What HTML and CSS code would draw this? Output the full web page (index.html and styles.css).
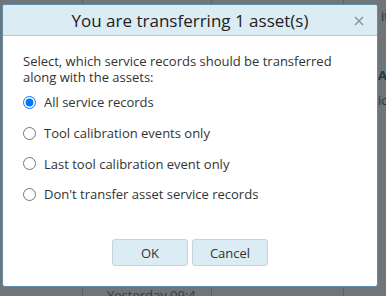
FILE: index.html
```html
<!DOCTYPE html>
<html lang="en">
<head>
  <meta charset="UTF-8" />
  <meta name="viewport" content="width=device-width, initial-scale=1.0" />
  <title>Transfer assets</title>
  <link rel="stylesheet" href="styles.css">
</head>
<body>

  <!-- page behind the dialog -->
  <div class="fondo">
    <div class="fila">
      <span class="celda c1"></span>
      <span class="celda c2"></span>
      <span class="celda c3"></span>
      <span class="celda c4">it</span>
    </div>
    <div class="lado">
      <p class="lado-titulo">Al</p>
      <p class="lado-texto">ic</p>
    </div>
    <div class="fila abajo">
      <span class="celda c1"></span>
      <span class="celda c2">Yesterday 09:4</span>
      <span class="celda c3"></span>
      <span class="celda c4"></span>
    </div>
  </div>

  <div class="dialogo">
    <div class="cabecera">
      <h1>You are transferring 1 asset(s)</h1>
      <button class="cerrar" aria-label="Close">
        <svg width="10" height="10" viewBox="0 0 10 10">
          <path d="M1 1 L9 9 M9 1 L1 9" stroke="#8f999e" stroke-width="1.6" fill="none"/>
        </svg>
      </button>
    </div>

    <div class="cuerpo">
      <p class="pregunta">Select, which service records should be transferred along with the assets:</p>

      <label class="opcion">
        <input type="radio" name="registros" checked>
        <span>All service records</span>
      </label>
      <label class="opcion">
        <input type="radio" name="registros">
        <span>Tool calibration events only</span>
      </label>
      <label class="opcion">
        <input type="radio" name="registros">
        <span>Last tool calibration event only</span>
      </label>
      <label class="opcion">
        <input type="radio" name="registros">
        <span>Don't transfer asset service records</span>
      </label>
    </div>

    <div class="botones">
      <button class="boton">OK</button>
      <button class="boton">Cancel</button>
    </div>
  </div>

</body>
</html>
```

FILE: styles.css
```css
body {
  margin: 0;
  font-family: "Open Sans", "Noto Sans", sans-serif;
  background-color: #6f7579;
  width: 386px;
  height: 296px;
  overflow: hidden;
  position: relative;
}

/* page behind, dimmed */
.fondo {
  height: 296px;
  display: flex;
  flex-direction: column;
  justify-content: space-between;
}

.fila {
  display: flex;
  height: 30px;
}

.celda {
  border-right: 1px solid #5c6266;
  color: #1d3340;
  font-size: 13px;
  line-height: 30px;
  overflow: hidden;
  white-space: nowrap;
}

.c1 { width: 82px; }
.c2 { width: 129px; padding-left: 24px; box-sizing: border-box; }
.c3 { width: 131px; }
.c4 { flex: 1; border-right: none; padding-left: 37px; line-height: 32px; }

.abajo {
  height: 11px;
  align-items: flex-start;
}

.abajo .celda {
  line-height: 20px;
  height: 11px;
  color: #2a3e4a;
}

.lado {
  align-self: flex-end;
  width: 8px;
  margin-top: -140px;
  overflow: hidden;
  color: #1d3a4a;
  font-size: 13px;
}

.lado p {
  margin: 0;
}

.lado-titulo {
  font-weight: bold;
  margin-bottom: 7px !important;
}

/* dialog */
.dialogo {
  position: absolute;
  left: 2px;
  top: 4px;
  width: 374px;
  height: 281px;
  background-color: white;
  border: 1px solid #5f8ea8;
  border-radius: 3px;
  display: flex;
  flex-direction: column;
  overflow: hidden;
}

.cabecera {
  background-color: #dbecf4;
  border-bottom: 1px solid #b7c9d2;
  height: 30px;
  display: flex;
  align-items: center;
  justify-content: center;
  position: relative;
}

.cabecera h1 {
  margin: 0;
  font-size: 17px;
  font-weight: normal;
  color: #222;
}

.cerrar {
  position: absolute;
  right: 13px;
  top: 11px;
  border: none;
  background: none;
  padding: 0;
  display: flex;
}

.cuerpo {
  padding: 17px 20px 0 20px;
  flex: 1;
}

.pregunta {
  margin: 0 0 2px 0;
  font-size: 13px;
  line-height: 16px;
  color: #333;
}

.opcion {
  display: flex;
  align-items: center;
  height: 30.7px;
  font-size: 13px;
  color: #333;
}

.opcion input {
  margin: 0 8px 0 0;
  width: 13px;
  height: 13px;
}

.botones {
  display: flex;
  justify-content: center;
  gap: 4px;
  padding-bottom: 20px;
}

.boton {
  width: 76px;
  height: 27px;
  background-color: #dbecf4;
  border: 1px solid #c6d3d9;
  border-radius: 3px;
  font-family: inherit;
  font-size: 13px;
  color: #333;
}
```
